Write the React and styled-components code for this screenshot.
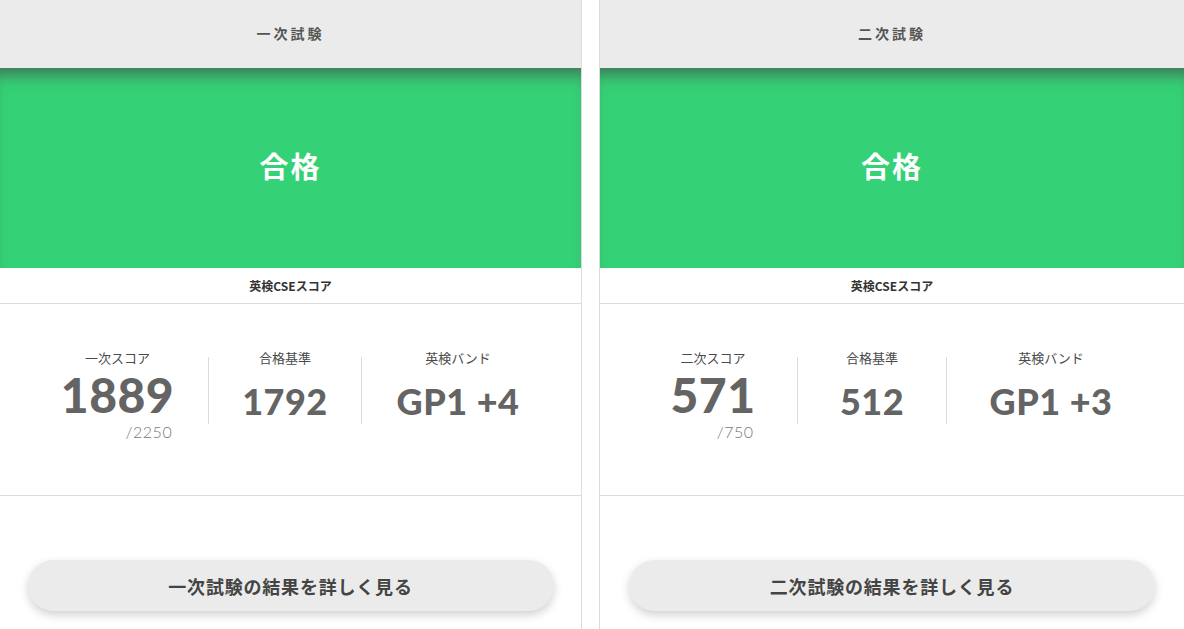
import React from "react";
import styled, { createGlobalStyle } from "styled-components";

const GlobalStyle = createGlobalStyle`
  body {
    margin: 0;
    background: #fff;
    font-family: "Noto Sans CJK JP", "Noto Sans", sans-serif;
  }
`;

const results = [
  {
    title: "一次試験",
    status: "合格",
    scoreLabel: "一次スコア",
    score: "1889",
    max: "/2250",
    pass: "1792",
    band: "GP1 +4",
    widths: [181, 152, 192],
    button: "一次試験の結果を詳しく見る",
  },
  {
    title: "二次試験",
    status: "合格",
    scoreLabel: "二次スコア",
    score: "571",
    max: "/750",
    pass: "512",
    band: "GP1 +3",
    widths: [168, 148, 208],
    button: "二次試験の結果を詳しく見る",
  },
];

const ResultPanel = ({ data, side }) => {
  const [w1, w2, w3] = data.widths;
  return (
    <Panel side={side}>
      <Header>{data.title}</Header>
      <Status>{data.status}</Status>
      <SectionTitle>英検CSEスコア</SectionTitle>
      <Stats>
        <StatCol width={w1}>
          <Label>{data.scoreLabel}</Label>
          <ValueBlock>
            <ValueRow>
              <Value big>{data.score}</Value>
            </ValueRow>
            <Sub>{data.max}</Sub>
          </ValueBlock>
        </StatCol>
        <Divider />
        <StatCol width={w2}>
          <Label>合格基準</Label>
          <ValueRow>
            <Value>{data.pass}</Value>
          </ValueRow>
        </StatCol>
        <Divider />
        <StatCol width={w3}>
          <Label>英検バンド</Label>
          <ValueRow>
            <Value>{data.band}</Value>
          </ValueRow>
        </StatCol>
      </Stats>
      <Footer>
        <DetailButton>{data.button}</DetailButton>
      </Footer>
    </Panel>
  );
};

const App = () => {
  return (
    <>
      <GlobalStyle />
      <Page>
        <ResultPanel data={results[0]} side="left" />
        <ResultPanel data={results[1]} side="right" />
      </Page>
    </>
  );
};

const Page = styled.div`
  display: flex;
  gap: 17px;
  width: 1184px;
  height: 629px;
  overflow: hidden;
`;

const Panel = styled.div`
  display: flex;
  flex-direction: column;
  width: ${(p) => (p.side === "left" ? "582px" : "585px")};
  box-sizing: border-box;
  border-right: ${(p) => (p.side === "left" ? "1px solid #dcdcdc" : "none")};
  border-left: ${(p) => (p.side === "right" ? "1px solid #dcdcdc" : "none")};
  background: #fff;
`;

const Header = styled.div`
  flex-shrink: 0;
  height: 68px;
  box-sizing: border-box;
  padding-bottom: 3px;
  display: flex;
  align-items: center;
  justify-content: center;
  background: #ebebeb;
  color: #555;
  font-size: 14px;
  font-weight: 700;
  letter-spacing: 3px;
`;

const Status = styled.div`
  flex-shrink: 0;
  height: 200px;
  box-sizing: border-box;
  padding-bottom: 7px;
  display: flex;
  align-items: center;
  justify-content: center;
  background: #35d176;
  box-shadow: inset 0 16px 16px -10px rgba(70, 80, 75, 0.75);
  color: #fff;
  font-size: 29px;
  font-weight: 700;
  letter-spacing: 2px;
`;

const SectionTitle = styled.div`
  flex-shrink: 0;
  height: 36px;
  box-sizing: border-box;
  padding-bottom: 1px;
  display: flex;
  align-items: center;
  justify-content: center;
  border-bottom: 1px solid #dcdcdc;
  color: #333;
  font-size: 12px;
  font-weight: 700;
`;

const Stats = styled.div`
  flex-shrink: 0;
  height: 192px;
  box-sizing: border-box;
  padding-top: 46px;
  display: flex;
  justify-content: center;
  align-items: flex-start;
  border-bottom: 1px solid #dcdcdc;
`;

const StatCol = styled.div`
  width: ${(p) => p.width}px;
  display: flex;
  flex-direction: column;
  align-items: center;
`;

const Divider = styled.div`
  width: 1px;
  height: 67px;
  margin-top: 7px;
  background: #dcdcdc;
`;

const Label = styled.div`
  height: 16px;
  line-height: 16px;
  font-size: 13px;
  color: #4a4a4a;
`;

const ValueBlock = styled.div`
  display: flex;
  flex-direction: column;
  align-items: flex-end;
`;

const ValueRow = styled.div`
  height: 53px;
  display: flex;
  align-items: flex-end;
  justify-content: center;
`;

const Value = styled.div`
  font-family: "Lato", "Liberation Sans", sans-serif;
  font-weight: 900;
  font-size: ${(p) => (p.big ? "48px" : "36px")};
  line-height: 1;
  color: #646464;
  letter-spacing: 0.5px;
`;

const Sub = styled.div`
  margin-top: 3px;
  margin-right: 2px;
  font-family: "Lato", "Liberation Sans", sans-serif;
  font-weight: 300;
  font-size: 16px;
  line-height: 20px;
  color: #777;
  letter-spacing: 0.5px;
`;

const Footer = styled.div`
  flex: 1;
  display: flex;
  justify-content: center;
  padding-top: 64px;
`;

const DetailButton = styled.button`
  width: 526px;
  height: 51px;
  border: none;
  border-radius: 26px;
  background: #ebebeb;
  box-shadow: 0 4px 10px rgba(0, 0, 0, 0.18);
  font-family: "Noto Sans CJK JP", "Noto Sans", sans-serif;
  font-size: 18px;
  font-weight: 700;
  letter-spacing: 0.8px;
  color: #444;
  cursor: pointer;
`;

export default App;
